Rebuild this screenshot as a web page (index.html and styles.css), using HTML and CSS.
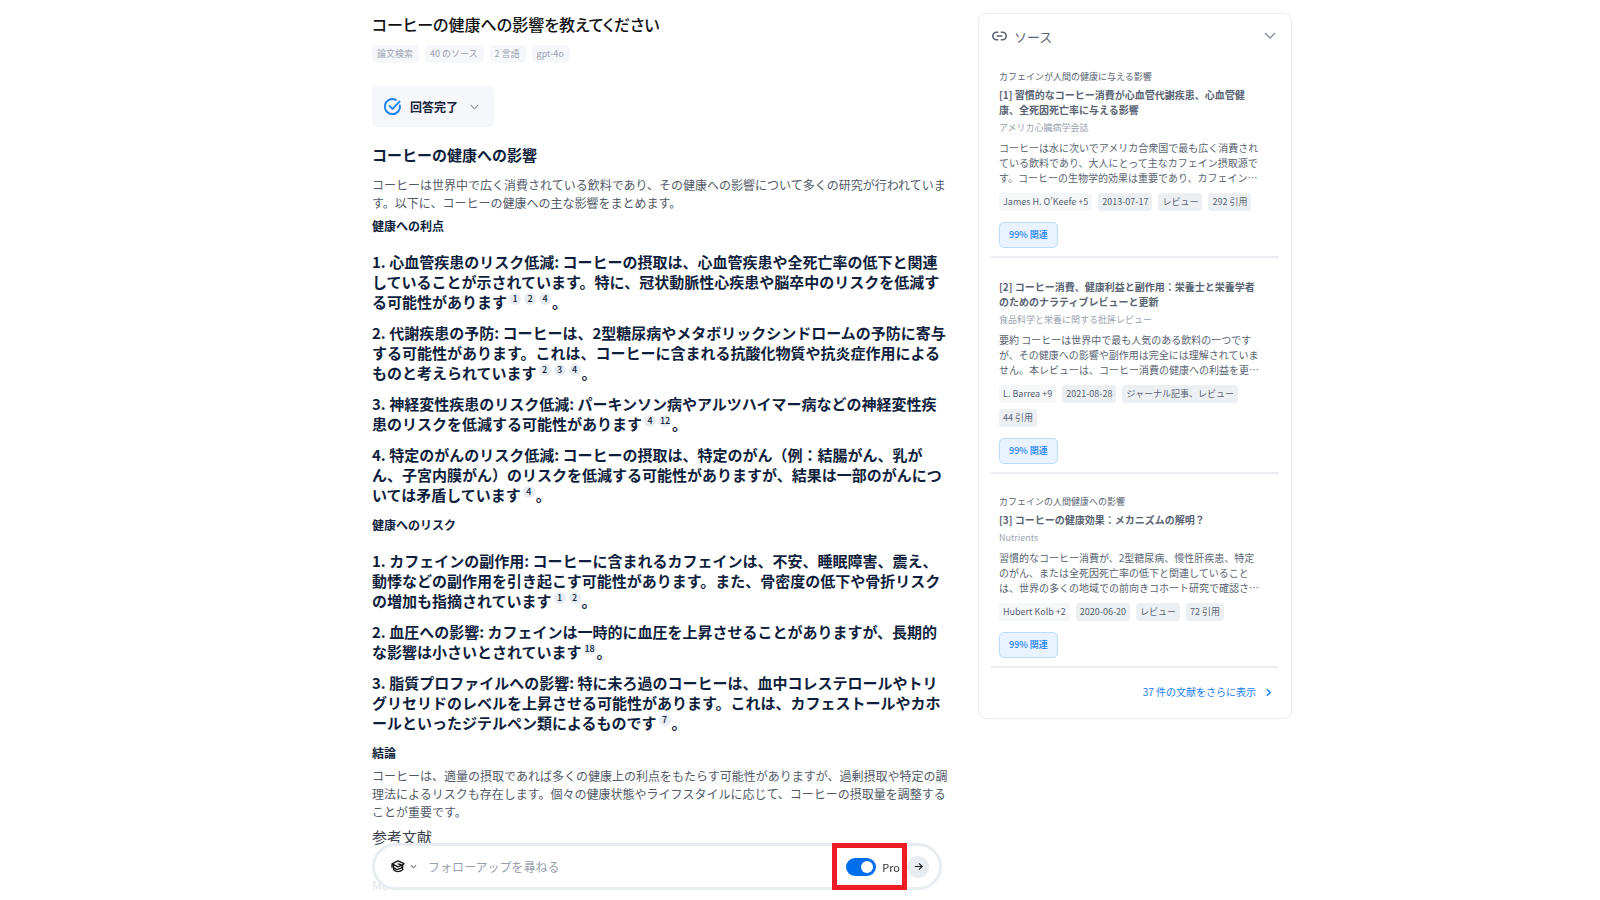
FILE: index.html
```html
<!DOCTYPE html>
<html lang="ja">
<head>
<meta charset="utf-8">
<title>コーヒーの健康への影響を教えてください</title>
<link rel="stylesheet" href="styles.css">
</head>
<body>
<div class="page">
  <main class="answer">
    <h1 class="question">コーヒーの健康への影響を教えてください</h1>
    <div class="meta">
      <span class="meta-tag">論文検索</span>
      <span class="meta-tag">40 のソース</span>
      <span class="meta-tag">2 言語</span>
      <span class="meta-tag">gpt-4o</span>
    </div>
    <button class="status" type="button">
      <svg class="status-icon" viewBox="0 0 18 18" fill="none" stroke="currentColor" stroke-width="2" stroke-linecap="round" stroke-linejoin="round"><path d="M12.6 2A8 8 0 1 0 16.8 8"/><path d="M6 8.6l3 3 7.4-7.8"/></svg>
      <span>回答完了</span>
      <svg class="status-chevron" viewBox="0 0 10 6" fill="none" stroke="currentColor" stroke-width="1.2" stroke-linecap="round" stroke-linejoin="round"><path d="M1 1l4 4 4-4"/></svg>
    </button>

    <h2 class="section-title">コーヒーの健康への影響</h2>
    <p class="body-text">コーヒーは世界中で広く消費されている飲料であり、その健康への影響について多くの研究が行われています。以下に、コーヒーの健康への主な影響をまとめます。</p>

    <h3 class="sub-title">健康への利点</h3>
    <div class="points">
      <p class="point">1. 心血管疾患のリスク低減: コーヒーの摂取は、心血管疾患や全死亡率の低下と関連していることが示されています。特に、冠状動脈性心疾患や脳卒中のリスクを低減する可能性があります<a class="cite" href="#s1">1</a><a class="cite" href="#s2">2</a><a class="cite" href="#s4">4</a>。</p>
      <p class="point">2. 代謝疾患の予防: コーヒーは、2型糖尿病やメタボリックシンドロームの予防に寄与する可能性があります。これは、コーヒーに含まれる抗酸化物質や抗炎症作用によるものと考えられています<a class="cite" href="#s2">2</a><a class="cite" href="#s3">3</a><a class="cite" href="#s4">4</a>。</p>
      <p class="point">3. 神経変性疾患のリスク低減: パーキンソン病やアルツハイマー病などの神経変性疾患のリスクを低減する可能性があります<a class="cite" href="#s4">4</a><a class="cite" href="#s12">12</a>。</p>
      <p class="point">4. 特定のがんのリスク低減: コーヒーの摂取は、特定のがん（例：結腸がん、乳がん、子宮内膜がん）のリスクを低減する可能性がありますが、結果は一部のがんについては矛盾しています<a class="cite" href="#s4">4</a>。</p>
    </div>

    <h3 class="sub-title">健康へのリスク</h3>
    <div class="points">
      <p class="point">1. カフェインの副作用: コーヒーに含まれるカフェインは、不安、睡眠障害、震え、動悸などの副作用を引き起こす可能性があります。また、骨密度の低下や骨折リスクの増加も指摘されています<a class="cite" href="#s1">1</a><a class="cite" href="#s2">2</a>。</p>
      <p class="point">2. 血圧への影響: カフェインは一時的に血圧を上昇させることがありますが、長期的な影響は小さいとされています<a class="cite" href="#s18">18</a>。</p>
      <p class="point">3. 脂質プロファイルへの影響: 特に未ろ過のコーヒーは、血中コレステロールやトリグリセリドのレベルを上昇させる可能性があります。これは、カフェストールやカホールといったジテルペン類によるものです<a class="cite" href="#s7">7</a>。</p>
    </div>

    <h3 class="sub-title">結論</h3>
    <p class="body-text">コーヒーは、適量の摂取であれば多くの健康上の利点をもたらす可能性がありますが、過剰摂取や特定の調理法によるリスクも存在します。個々の健康状態やライフスタイルに応じて、コーヒーの摂取量を調整することが重要です。</p>
    <h2 class="refs-title">参考文献</h2>
    <p class="ref-line">Mo</p>
  </main>

  <aside class="sources">
    <header class="sources-head">
      <svg class="link-icon" viewBox="0 0 18 12" fill="none" stroke="currentColor" stroke-width="2"><path d="M7.5 1.5H5.5a4.5 4.5 0 0 0 0 9h2M10.5 1.5h2a4.5 4.5 0 0 1 0 9h-2M5.5 6h7"/></svg>
      <h2 class="sources-title">ソース</h2>
      <button class="collapse" type="button" aria-label="折りたたむ"><svg viewBox="0 0 12 8" fill="none" stroke="currentColor" stroke-width="1.5"><path d="M1 1l5 5 5-5"/></svg></button>
    </header>

    <article class="source" id="s1">
      <p class="topic">カフェインが人間の健康に与える影響</p>
      <h3 class="source-title">[1] 習慣的なコーヒー消費が心血管代謝疾患、心血管健康、全死因死亡率に与える影響</h3>
      <p class="journal">アメリカ心臓病学会誌</p>
      <p class="abstract">コーヒーは水に次いでアメリカ合衆国で最も広く消費されている飲料であり、大人にとって主なカフェイン摂取源です。コーヒーの生物学的効果は重要であり、カフェイン…</p>
      <div class="tags"><span class="tag author">James H. O’Keefe +5</span><span class="tag">2013-07-17</span><span class="tag">レビュー</span><span class="tag">292 引用</span></div>
      <span class="relevance">99% 関連</span>
    </article>

    <article class="source" id="s2">
      <h3 class="source-title">[2] コーヒー消費、健康利益と副作用：栄養士と栄養学者のためのナラティブレビューと更新</h3>
      <p class="journal">食品科学と栄養に関する批評レビュー</p>
      <p class="abstract">要約 コーヒーは世界中で最も人気のある飲料の一つですが、その健康への影響や副作用は完全には理解されていません。本レビューは、コーヒー消費の健康への利益を更…</p>
      <div class="tags"><span class="tag author">L. Barrea +9</span><span class="tag">2021-08-28</span><span class="tag">ジャーナル記事、レビュー</span><span class="tag">44 引用</span></div>
      <span class="relevance">99% 関連</span>
    </article>

    <article class="source" id="s3">
      <p class="topic">カフェインの人間健康への影響</p>
      <h3 class="source-title">[3] コーヒーの健康効果：メカニズムの解明？</h3>
      <p class="journal">Nutrients</p>
      <p class="abstract">習慣的なコーヒー消費が、2型糖尿病、慢性肝疾患、特定のがん、または全死因死亡率の低下と関連していることは、世界の多くの地域での前向きコホート研究で確認さ…</p>
      <div class="tags"><span class="tag author">Hubert Kolb +2</span><span class="tag">2020-06-20</span><span class="tag">レビュー</span><span class="tag">72 引用</span></div>
      <span class="relevance">99% 関連</span>
    </article>

    <a class="more" href="#more">37 件の文献をさらに表示 <svg viewBox="0 0 6 10" fill="none" stroke="currentColor" stroke-width="1.8"><path d="M1 1l4 4-4 4"/></svg></a>
  </aside>
</div>

<form class="followup">
  <button class="mode" type="button" aria-label="検索モード">
    <svg class="cap" viewBox="0 0 14 13" fill="none" stroke="currentColor" stroke-width="1.3" stroke-linejoin="round" stroke-linecap="round"><path d="M7 .8l6 2.9-1 .8-5 2.300-6-3zM1 3.800v3.500M2.500 5v4.800Q7 13.600 11.700 9.800V4.500M7 3.800q3 .2 4.700 2.700M2.500 7.300q2 2.400 4.700 1.900t4.500-2.700"/></svg>
    <svg class="mode-chevron" viewBox="0 0 8 5" fill="none" stroke="currentColor" stroke-width="1.3"><path d="M1 1l3 3 3-3"/></svg>
  </button>
  <input class="ask" type="text" aria-label="フォローアップ" placeholder="フォローアップを尋ねる">
  <label class="pro"><input class="switch" type="checkbox" role="switch" checked>Pro</label>
  <button class="send" type="button" aria-label="送信"><svg viewBox="0 0 10 10" fill="none" stroke="currentColor" stroke-width="1.3"><path d="M1 5h8M5.5 1.5L9 5 5.5 8.5"/></svg></button>
</form>
</body>
</html>
```
FILE: styles.css
```css
* { box-sizing: border-box; }
html { height: 100%; overflow: hidden; }
body {
  margin: 0;
  height: 100%;
  overflow: hidden;
  background: #fff;
  color: #0f1f3d;
  font-family: "Noto Sans CJK JP", sans-serif;
  font-size: 12px;
}
h1, h2, h3, p { margin: 0; }
button { font: inherit; color: inherit; border: 0; padding: 0; background: none; }
a { color: inherit; text-decoration: none; }
svg { display: block; overflow: visible; }

.page {
  display: grid;
  grid-template-columns: minmax(0, 578px) 314px;
  column-gap: 28px;
  align-items: start;
  max-width: 920px;
  margin: 0 auto 0 372px;
  padding-top: 13px;
}

.question {
  font-size: 16px;
  line-height: 22px;
  font-weight: 500;
  color: #111;
  font-feature-settings: "palt";
}
.meta { display: flex; gap: 6px; margin-top: 10px; }
.meta-tag {
  padding: 0 6px 0 5px;
  border-radius: 5px;
  background: #f5f7fa;
  color: #9a9fb0;
  font-size: 9px;
  line-height: 18px;
}
.status {
  display: flex;
  align-items: center;
  margin-top: 23px;
  height: 41px;
  padding: 0 15px 0 12px;
  border-radius: 5px;
  background: #f5f7fa;
  color: #17233d;
  font-weight: 700;
}
.status-icon { width: 17px; height: 17px; margin-right: 9px; color: #1a80f5; }
.status-chevron { width: 9px; height: 6px; margin-left: 12px; color: #8b94a5; }

.section-title { margin-top: 17px; font-size: 15px; line-height: 22px; font-weight: 700; }
.body-text { margin-top: 10px; line-height: 18px; color: #525a68; }
.sub-title { margin-top: 5px; font-size: 12px; line-height: 18px; font-weight: 700; }
.points { display: flex; flex-direction: column; gap: 11px; margin-top: 17px; }
.point { font-size: 15px; line-height: 20px; font-weight: 700; }
.points + .sub-title { margin-top: 11px; }
.sub-title + .body-text { margin-top: 5px; }
.cite {
  display: inline-block;
  min-width: 12px;
  height: 12px;
  margin: 0 1px 0 2px;
  border-radius: 6px;
  background: #e6ecf2;
  font-size: 9px;
  line-height: 12px;
  font-weight: 500;
  text-align: center;
  vertical-align: 6px;
}
.refs-title { margin-top: 6px; font-size: 15px; line-height: 20px; font-weight: 400; color: #39414f; }
.ref-line { margin-top: 29px; line-height: 18px; color: #e2e2e4; }

.sources {
  padding: 0 12px 10px;
  border: 1px solid #e8ebf0;
  border-radius: 8px;
  color: #596473;
}
.sources-head { display: flex; align-items: center; gap: 6px; height: 44px; }
.link-icon { width: 17px; height: 10px; }
.sources-title { font-size: 13px; font-weight: 400; }
.collapse { margin-left: auto; padding-right: 3px; color: #8b94a5; }
.collapse svg { width: 12px; height: 8px; }
.source { padding: 12px 8px 8px; border-bottom: 2px solid #ebedf1; }
.source + .source { padding-top: 21px; }
.topic { margin-bottom: 3px; font-size: 9px; line-height: 14px; }
.source-title { max-width: 264px; font-size: 10px; line-height: 15px; font-weight: 700; }
.journal { margin-top: 4px; font-size: 9px; line-height: 14px; color: #9a9fb0; }
.abstract { max-width: 264px; margin-top: 5px; font-size: 10px; line-height: 15px; }
.tags { display: flex; flex-wrap: wrap; gap: 6px; margin-top: 8px; }
.tag { padding: 0 4px; border-radius: 3px; background: #edf0f3; font-size: 9px; line-height: 18px; }
.author { background: #f6f7f9; }
.relevance {
  display: inline-block;
  margin-top: 11px;
  padding: 0 9px;
  border: 1px solid #b9dcff;
  border-radius: 5px;
  background: #e8f3ff;
  color: #1a80f5;
  font-size: 9px;
  line-height: 24px;
  font-weight: 500;
}
.more {
  display: flex;
  justify-content: flex-end;
  align-items: center;
  gap: 10px;
  padding: 14px 8px 6px;
  color: #1a80f5;
  font-size: 10px;
  line-height: 20px;
}
.more svg { width: 5px; height: 9px; }

.followup {
  position: fixed;
  left: 372px;
  bottom: 10px;
  display: flex;
  align-items: center;
  width: 570px;
  height: 47px;
  padding: 0 10px 0 16px;
  border: 3px solid #e8edf2;
  border-radius: 24px;
  background: #fff;
}
.mode { display: flex; align-items: center; gap: 5px; color: #111; }
.cap { width: 14px; height: 13px; }
.mode-chevron { width: 7px; height: 5px; color: #777; }
.ask { flex: 1; min-width: 0; margin-left: 11px; padding: 0; border: 0; outline: 0; background: none; font: inherit; }
.ask::placeholder { color: #9a9fb0; opacity: 1; }
.pro {
  display: flex;
  align-items: center;
  gap: 6px;
  height: 47px;
  padding: 0 2px 0 9px;
  border: 5px solid #ed1c24;
  color: #333;
  font-size: 11px;
}
.switch { appearance: none; display: flex; width: 30px; height: 18px; margin: 0; padding: 3px; border-radius: 9px; background: #006fee; }
.switch::before { content: ""; width: 12px; height: 12px; margin-left: auto; border-radius: 50%; background: #fff; }
.send { display: grid; place-items: center; flex: none; width: 22px; height: 22px; border-radius: 50%; background: #e8edf2; color: #222; }
.send svg { width: 9px; height: 9px; }
```
